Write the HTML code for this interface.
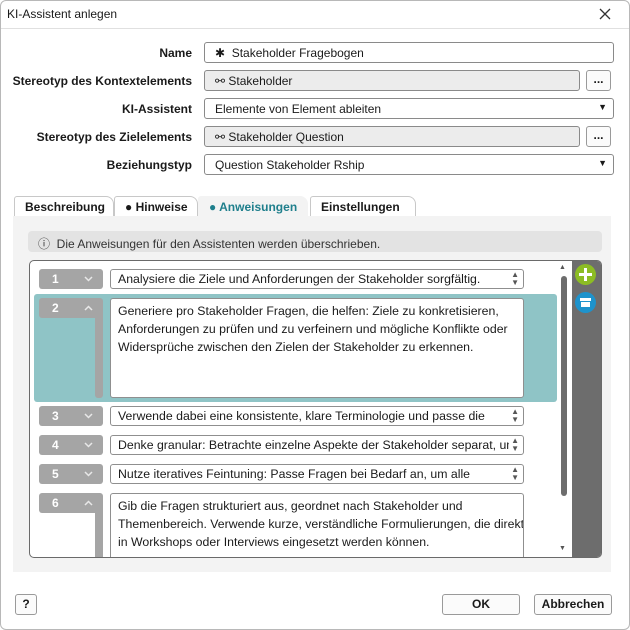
<!DOCTYPE html><html><head><style>
*{box-sizing:border-box;margin:0;padding:0}
body{width:630px;height:630px;overflow:hidden;font-family:"Liberation Sans",sans-serif;font-size:12px;color:#1a1a1a;background:#fff;position:relative}
.a{position:absolute}
.lbl{position:absolute;right:438px;font-weight:bold;font-size:12px;text-align:right;white-space:nowrap}
.fld{position:absolute;left:204px;height:21px;border:1px solid #8a8a8a;border-radius:3px;background:#fff;padding:3px 0 0 10px;white-space:nowrap}
.ro{background:#ececec}
.btn{position:absolute;border:1px solid #9a9a9a;border-radius:3px;background:#fbfbfb;text-align:center;font-weight:bold}
.num{position:absolute;left:39px;width:64px;height:20px;background:#a5a5a5;border-radius:3px;color:#fff;font-weight:bold;padding:3px 0 0 13px}
.num svg{position:absolute;left:45px;top:7px}
.tb{position:absolute;left:110px;width:414px;border:1px solid #8f8f8f;border-radius:3px;background:#fff;padding:0 0 0 7px;white-space:nowrap;overflow:hidden;line-height:18px;font-size:12.3px}
.sp{position:absolute;right:4px;top:1px;font-size:8px;line-height:8px;color:#555;background:#fff;padding-left:2px}
.tab{position:absolute;top:196px;height:21px;font-weight:bold;padding:3px 0 0 10px;border:1px solid #c8c8c8;border-bottom:none;border-radius:3px 8px 0 0;background:#fff}
</style></head><body>
<div class="a" style="left:0;top:0;width:630px;height:630px;border:1px solid #b8b8b8;border-radius:6px"></div>
<div class="a" style="left:7px;top:7px;font-size:12px">KI-Assistent anlegen</div>
<svg class="a" style="left:599px;top:8px" width="12" height="12"><path d="M1 1L11 11M11 1L1 11" stroke="#333" stroke-width="1.3"/></svg>
<div class="a" style="left:1px;top:28px;width:628px;height:1px;background:#e0e0e0"></div>

<div class="lbl" style="top:46px">Name</div>
<div class="fld" style="top:42px;width:410px">✱&nbsp; Stakeholder Fragebogen</div>
<div class="lbl" style="top:74px">Stereotyp des Kontextelements</div>
<div class="fld ro" style="top:70px;width:376px">⚯ Stakeholder</div>
<div class="btn" style="left:586px;top:70px;width:25px;height:21px;line-height:16px">...</div>
<div class="lbl" style="top:102px">KI-Assistent</div>
<div class="fld" style="top:98px;width:410px">Elemente von Element ableiten<span class="a" style="right:6px;top:3px;font-size:9px">▼</span></div>
<div class="lbl" style="top:130px">Stereotyp des Zielelements</div>
<div class="fld ro" style="top:126px;width:376px">⚯ Stakeholder Question</div>
<div class="btn" style="left:586px;top:126px;width:25px;height:21px;line-height:16px">...</div>
<div class="lbl" style="top:158px">Beziehungstyp</div>
<div class="fld" style="top:154px;width:410px">Question Stakeholder Rship<span class="a" style="right:6px;top:3px;font-size:9px">▼</span></div>

<div class="tab" style="left:14px;width:100px">Beschreibung</div>
<div class="tab" style="left:114px;width:84px">● Hinweise</div>
<div class="tab" style="left:198px;width:110px;color:#1f7f8c;border-color:#f3f3f3;background:#f3f3f3">● Anweisungen</div>
<div class="tab" style="left:310px;width:106px">Einstellungen</div>
<div class="a" style="left:13px;top:216px;width:598px;height:356px;background:#f3f3f3"></div>
<div class="a" style="left:28px;top:231px;width:574px;height:21px;background:#e3e3e3;border-radius:4px;padding:4px 0 0 10px;color:#333">ⓘ&nbsp; Die Anweisungen für den Assistenten werden überschrieben.</div>

<div class="a" style="left:29px;top:260px;width:573px;height:298px;border:1px solid #6a6a6a;border-radius:5px;background:#fff;overflow:hidden">
 <div class="a" style="left:542px;top:0;width:31px;height:298px;background:#6d6d6d"></div>
</div>
<div class="a" style="left:575px;top:264px;width:21px;height:21px;border-radius:50%;background:#8cbc24"><div class="a" style="left:9px;top:4px;width:3px;height:13px;background:#fff"></div><div class="a" style="left:4px;top:9px;width:13px;height:3px;background:#fff"></div></div>
<div class="a" style="left:575px;top:292px;width:21px;height:21px;border-radius:50%;background:#1e93cc"><div class="a" style="left:5px;top:6px;width:11px;height:3px;background:#fff"></div><div class="a" style="left:6px;top:10px;width:9px;height:5px;background:#fff"></div></div>
<div class="a" style="left:559px;top:264px;font-size:7px;color:#555">▲</div>
<div class="a" style="left:561px;top:276px;width:6px;height:220px;border-radius:3px;background:#6d6d6d"></div>
<div class="a" style="left:559px;top:545px;font-size:7px;color:#555">▼</div>

<div class="num" style="top:269px">1<svg width="9" height="6"><path d="M1 1L4.5 4.5L8 1" stroke="#e8e8e8" stroke-width="1.5" fill="none"/></svg></div>
<div class="tb" style="top:269px;height:20px">Analysiere die Ziele und Anforderungen der Stakeholder sorgfältig.<span class="sp">▲<br>▼</span></div>
<div class="a" style="left:34px;top:294px;width:523px;height:108px;background:#8fc4c6;border-radius:3px"></div>
<div class="num" style="top:298px;height:20px">2<svg width="9" height="6"><path d="M1 5L4.5 1.5L8 5" stroke="#e8e8e8" stroke-width="1.5" fill="none"/></svg></div>
<div class="a" style="left:95px;top:310px;width:8px;height:88px;background:#a5a5a5;border-radius:0 0 3px 3px"></div>
<div class="tb" style="top:298px;height:100px;padding-top:3px">Generiere pro Stakeholder Fragen, die helfen: Ziele zu konkretisieren,<br>Anforderungen zu prüfen und zu verfeinern und mögliche Konflikte oder<br>Widersprüche zwischen den Zielen der Stakeholder zu erkennen.</div>
<div class="num" style="top:406px">3<svg width="9" height="6"><path d="M1 1L4.5 4.5L8 1" stroke="#e8e8e8" stroke-width="1.5" fill="none"/></svg></div>
<div class="tb" style="top:406px;height:20px">Verwende dabei eine konsistente, klare Terminologie und passe die<span class="sp">▲<br>▼</span></div>
<div class="num" style="top:435px">4<svg width="9" height="6"><path d="M1 1L4.5 4.5L8 1" stroke="#e8e8e8" stroke-width="1.5" fill="none"/></svg></div>
<div class="tb" style="top:435px;height:20px">Denke granular: Betrachte einzelne Aspekte der Stakeholder separat, um<span class="sp">▲<br>▼</span></div>
<div class="num" style="top:464px">5<svg width="9" height="6"><path d="M1 1L4.5 4.5L8 1" stroke="#e8e8e8" stroke-width="1.5" fill="none"/></svg></div>
<div class="tb" style="top:464px;height:20px">Nutze iteratives Feintuning: Passe Fragen bei Bedarf an, um alle<span class="sp">▲<br>▼</span></div>
<div class="num" style="top:493px">6<svg width="9" height="6"><path d="M1 5L4.5 1.5L8 5" stroke="#e8e8e8" stroke-width="1.5" fill="none"/></svg></div>
<div class="a" style="left:95px;top:505px;width:8px;height:52px;background:#a5a5a5"></div>
<div class="tb" style="top:493px;height:64px;border-bottom:none;border-radius:3px 3px 0 0;padding-top:3px">Gib die Fragen strukturiert aus, geordnet nach Stakeholder und<br>Themenbereich. Verwende kurze, verständliche Formulierungen, die direkt<br>in Workshops oder Interviews eingesetzt werden können.</div>

<div class="btn" style="left:15px;top:594px;width:22px;height:21px;line-height:19px">?</div>
<div class="btn" style="left:442px;top:594px;width:78px;height:21px;line-height:19px">OK</div>
<div class="btn" style="left:534px;top:594px;width:78px;height:21px;line-height:19px">Abbrechen</div>
</body></html>
